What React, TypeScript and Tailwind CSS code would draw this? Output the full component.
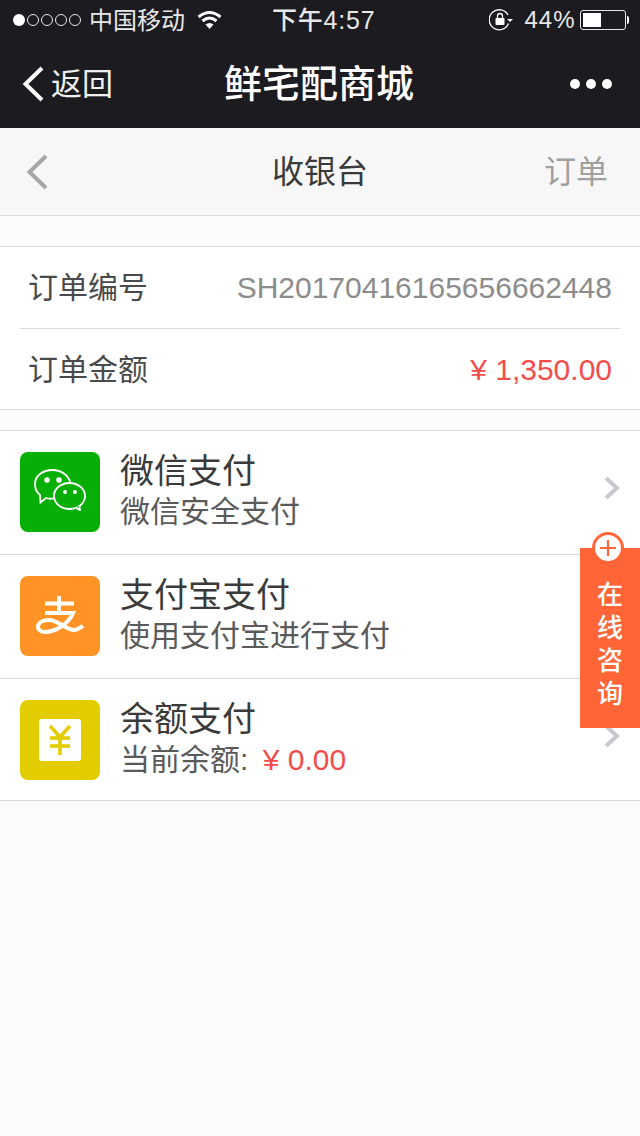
const font = { fontFamily: '"Liberation Sans", "Noto Sans CJK SC", sans-serif' }

function StatusBar() {
  return (
    <div className="flex h-10 items-center pl-[13px] pr-[9px] text-[#e8e8e8]">
      <div className="flex w-[68px] gap-[2px]">
        <span className="h-[12px] w-[12px] rounded-full bg-white" />
        {[0, 1, 2, 3].map((i) => (
          <span key={i} className="h-[12px] w-[12px] rounded-full border border-[#e8e8e8]" />
        ))}
      </div>
      <span className="ml-[8px] mt-[2px] text-[24px] leading-none">中国移动</span>
      <svg className="ml-[12px]" width="25" height="20" viewBox="0 0 25 20" fill="none" stroke="#fff" strokeWidth="3">
        <path d="M1.5 7 Q12.5 -2 23.5 7" />
        <path d="M5.5 11 Q12.5 5 19.5 11" />
        <path d="M12.5 19 L8.5 14.5 Q12.5 11.5 16.5 14.5 Z" fill="#fff" stroke="none" />
      </svg>
      <span className="ml-[50px] mt-[1px] text-[25px] font-medium leading-none tracking-[0.8px]">下午4:57</span>
      <svg className="ml-[114px]" width="24" height="22" viewBox="0 0 24 22" fill="none">
        <path d="M19.5 14.5 A10 10 0 1 1 19 6" stroke="#fff" strokeWidth="1.3" />
        <path d="M18 10 L24 10 L21 13 Z" fill="#fff" />
        <rect x="6.5" y="9" width="9" height="7" rx="1" fill="#fff" />
        <path d="M8.5 9 V7 a2.5 2.5 0 0 1 5 0 V9" stroke="#fff" strokeWidth="1.3" />
      </svg>
      <span className="ml-[11px] text-[24px] leading-none tracking-[1px]">44%</span>
      <div className="ml-[4px] flex items-center">
        <div className="h-[20px] w-[46px] rounded-[3px] border border-[#e8e8e8] p-[2px]">
          <div className="h-full w-[18px] bg-white" />
        </div>
        <div className="ml-[1px] h-[8px] w-[2px] rounded-r-sm bg-white" />
      </div>
    </div>
  )
}

function NavBar() {
  return (
    <div className="flex h-[88px] items-center justify-between">
      <div className="flex items-center pl-[22px]">
        <svg width="22" height="36" viewBox="0 0 22 36" fill="none" stroke="#fff" strokeWidth="4">
          <path d="M20 2 L3.5 18 L20 34" />
        </svg>
        <span className="ml-[7px] text-[31px] leading-none text-[#f0f0f0]">返回</span>
      </div>
      <span className="absolute left-0 right-[2px] text-center text-[38px] font-medium leading-none text-white">鲜宅配商城</span>
      <div className="flex gap-[6px] pr-[28px]">
        <span className="h-[10px] w-[10px] rounded-full bg-white" />
        <span className="h-[10px] w-[10px] rounded-full bg-white" />
        <span className="h-[10px] w-[10px] rounded-full bg-white" />
      </div>
    </div>
  )
}

function PayRow({ icon, title, children, last }: { icon: React.ReactNode; title: string; children: React.ReactNode; last?: boolean }) {
  return (
    <div className={last ? 'flex h-[121px] pl-5 pr-5 pt-[21px]' : 'flex h-[124px] border-b border-[#d9d9d9] pl-5 pr-5 pt-[21px]'}>
      <div className="flex h-20 w-20 shrink-0 items-center justify-center">{icon}</div>
      <div className="ml-5 flex-1">
        <div className="text-[34px] leading-[38px] text-[#3a3a3a]">{title}</div>
        <div className="mt-[3px] text-[30px] leading-[38px] text-[#5a5a5a]">{children}</div>
      </div>
      <svg className="mt-[24px]" width="16" height="24" viewBox="0 0 16 24" fill="none" stroke="#c8c8cd" strokeWidth="4">
        <path d="M2 2 L13 12 L2 22" />
      </svg>
    </div>
  )
}

function WechatIcon() {
  return (
    <div className="flex h-20 w-20 items-center justify-center rounded-lg bg-[#06ae05]">
      <svg className="-mt-[4px]" width="52" height="42" viewBox="0 0 52 42" fill="none" stroke="#fff" strokeWidth="1.8">
        <path d="M21 29 C18 30 15 30 12 29 L6.5 33.5 L6 26 C2 23 1 19 1 15 C1 7 8.5 1 18.5 1 C27 1 34.5 6 36.5 14" />
        <ellipse cx="35.5" cy="27" rx="15.5" ry="13" />
        <path d="M42 38.5 L46 41.5 L45.5 36.5" fill="#06ae05" stroke="#fff" />
        <circle cx="13" cy="11" r="2.8" fill="#fff" stroke="none" />
        <circle cx="25" cy="11" r="2.8" fill="#fff" stroke="none" />
        <circle cx="31" cy="23" r="2" fill="#fff" stroke="none" />
        <circle cx="41" cy="23" r="2" fill="#fff" stroke="none" />
      </svg>
    </div>
  )
}

function AlipayIcon() {
  return (
    <div className="flex h-20 w-20 items-center justify-center rounded-lg bg-[#ff9326]">
      <svg width="48" height="40" viewBox="0 0 48 40" fill="none" stroke="#fff" strokeWidth="4">
        <path d="M9 7.5 H38" />
        <path d="M23 0 V17" />
        <path d="M9 17 H37 C33 27 20 36 9 36 C4 36 1.5 33 2 30 C3 26 8 24 13 24 C22 24 30 34 38 34 C41 34 44 32 47 30" />
      </svg>
    </div>
  )
}

function BalanceIcon() {
  return (
    <div className="flex h-20 w-20 items-center justify-center rounded-lg bg-[#e3cc00]">
      <div className="flex h-[42px] w-[42px] items-center justify-center rounded-[3px] bg-white">
        <svg width="24" height="30" viewBox="0 0 24 30" fill="none" stroke="#e3cc00" strokeWidth="3.6">
          <path d="M2 1 L12 12 L22 1" />
          <path d="M12 12 V30" />
          <path d="M2 13 H22" />
          <path d="M2 21 H22" />
        </svg>
      </div>
    </div>
  )
}

export default function App() {
  return (
    <div className="relative h-[1136px] w-[640px] overflow-hidden bg-[#fbfbfb]" style={font}>
      <div className="bg-[#1b1b20]">
        <StatusBar />
        <NavBar />
      </div>

      {/* Page title */}
      <div className="relative flex h-[88px] items-center justify-between border-b border-[#dcdcdc] bg-[#f7f7f7] pl-[26px] pr-[32px]">
        <svg width="22" height="36" viewBox="0 0 22 36" fill="none" stroke="#a6a6a6" strokeWidth="4">
          <path d="M20 2 L3.5 18 L20 34" />
        </svg>
        <span className="absolute left-0 right-0 text-center text-[32px] leading-none text-[#3a3a3a]">收银台</span>
        <span className="text-[32px] leading-none text-[#a0a0a0]">订单</span>
      </div>

      {/* Order info */}
      <div className="mt-[30px] border-y border-[#d9d9d9] bg-white">
        <div className="mx-5 flex h-[82px] items-center justify-between border-b border-[#d9d9d9] pl-[8px] pr-[8px]">
          <span className="text-[30px] text-[#4a4a4a]">订单编号</span>
          <span className="text-[30px] text-[#8c8c8c]">SH20170416165656662448</span>
        </div>
        <div className="flex h-[80px] items-center justify-between pl-[28px] pr-[28px]">
          <span className="text-[30px] text-[#4a4a4a]">订单金额</span>
          <span className="text-[30px] text-[#f24d4d]">¥ 1,350.00</span>
        </div>
      </div>

      {/* Payment methods */}
      <div className="mt-5 border-y border-[#d9d9d9] bg-white">
        <PayRow icon={<WechatIcon />} title="微信支付">微信安全支付</PayRow>
        <PayRow icon={<AlipayIcon />} title="支付宝支付">使用支付宝进行支付</PayRow>
        <PayRow icon={<BalanceIcon />} title="余额支付" last>
          当前余额: <span className="ml-[6px] text-[#f24d4d]">¥ 0.00</span>
        </PayRow>
      </div>

      {/* Floating consult tab */}
      <div className="absolute left-[580px] top-[548px] flex h-[180px] w-[60px] flex-col items-center bg-[#ff6537] pt-[31px]">
        <div className="absolute -top-4 left-[12px] flex h-8 w-8 items-center justify-center rounded-full border-[3px] border-[#ff6537] bg-white">
          <svg width="20" height="20" viewBox="0 0 20 20" stroke="#ff6537" strokeWidth="2.2">
            <path d="M10 2 V18 M2 10 H18" />
          </svg>
        </div>
        {['在', '线', '咨', '询'].map((c) => (
          <span key={c} className="h-[33px] text-[26px] font-medium leading-[33px] text-white">{c}</span>
        ))}
      </div>
    </div>
  )
}
